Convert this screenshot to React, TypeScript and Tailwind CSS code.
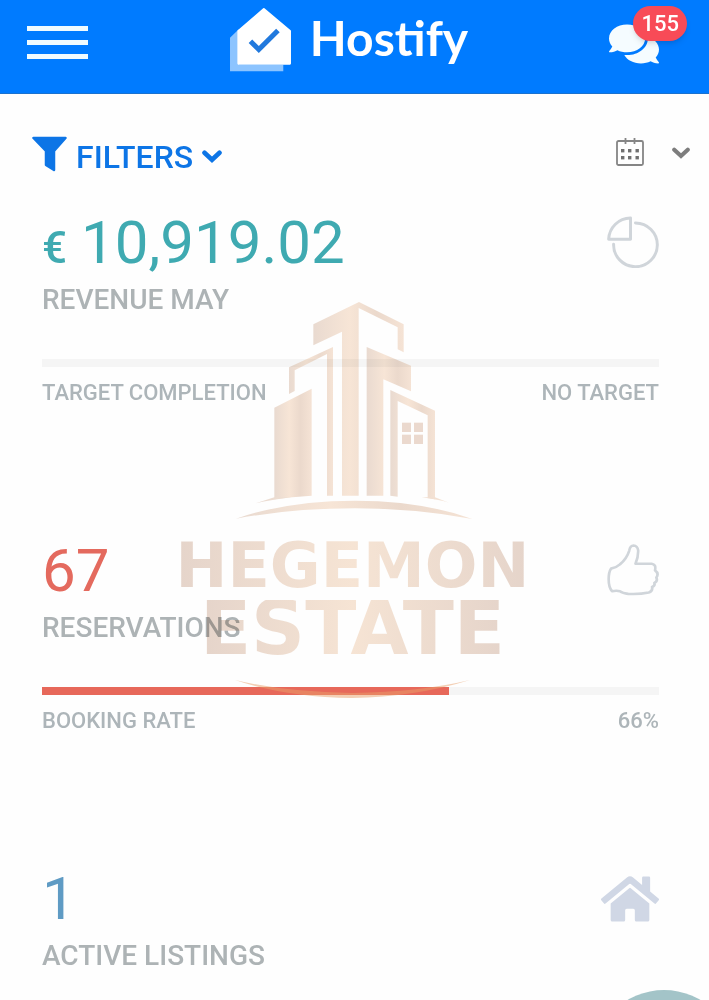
import type { ReactNode } from "react";
import { FaComments, FaHome } from "react-icons/fa";

function Logo() {
  return (
    <a href="#home" className="mb-0.5 flex items-center gap-[18px] text-white">
      <svg viewBox="30 20 188 194" className="h-[65px] w-[63px]" aria-hidden="true">
        <path d="M33 112 L60 86 V192 H192 V212 H33 Z" fill="#8cc4ff" />
        <path
          d="M134 26 L212 92 V189 H58 V92 Z"
          fill="#fff"
          stroke="#fff"
          strokeWidth="6"
          strokeLinejoin="round"
        />
        <path d="M94 122 L119 147 L176 90" fill="none" stroke="#2179dd" strokeWidth="15" />
      </svg>
      <span className="pb-1 font-['Lato',sans-serif] text-[48px] leading-[56px] font-bold">Hostify</span>
    </a>
  );
}

function Chevron({ className }: { className: string }) {
  return (
    <svg viewBox="0 0 20 13" className={className} aria-hidden="true">
      <path
        d="M2.5 2.8 L10 9.8 L17.5 2.8"
        fill="none"
        stroke="currentColor"
        strokeWidth="4.6"
        strokeLinecap="round"
      />
    </svg>
  );
}

function CalendarIcon() {
  return (
    <svg viewBox="0 0 28 28" className="size-7" aria-hidden="true">
      <rect x="1" y="3" width="26" height="24" rx="1.5" fill="none" stroke="#858585" strokeWidth="1.8" />
      <path d="M9.5 0 V6 M18.5 0 V6" stroke="#858585" strokeWidth="1.8" />
      <g fill="#6f6f6f">
        <rect x="5" y="11" width="3.4" height="3.4" />
        <rect x="12" y="11" width="3.4" height="3.4" />
        <rect x="19.5" y="11" width="3.4" height="3.4" />
        <rect x="5" y="18" width="3.4" height="3.4" />
        <rect x="12" y="18" width="3.4" height="3.4" />
        <rect x="19.5" y="18" width="3.4" height="3.4" />
      </g>
    </svg>
  );
}

function PieIcon() {
  return (
    <svg viewBox="51 46 157 157" className="size-[52px]" fill="none" stroke="#d0d5da" strokeWidth="9" aria-hidden="true">
      <path d="M122 52 V116 H56 C58 80 86 53 122 52 Z" strokeLinejoin="round" />
      <path d="M137 67 A66 66 0 1 1 71 131" strokeLinecap="round" />
    </svg>
  );
}

function ThumbIcon() {
  return (
    <svg viewBox="51 42 157 156" className="size-[52px]" fill="none" stroke="#d0d5da" strokeWidth="8" strokeLinejoin="round" aria-hidden="true">
      <path d="M137 101 H186 Q200 103 196 121 Q209 130 200 143 Q205 154 194 159 Q197 167 187 171 Q190 184 177 188 Q148 194 115 192 Q98 190 90 184 Q80 181 66 184 Q56 172 56 148 Q56 126 63 116 Q79 113 90 103 Q111 85 118 62 Q121 46 131 46 Q143 47 145 60 Q146 80 137 101 Z" />
    </svg>
  );
}

function Watermark() {
  return (
    <div
      aria-hidden="true"
      className="pointer-events-none absolute inset-x-0 top-[290px] flex flex-col items-center pr-1 font-['DejaVu_Sans',sans-serif] font-bold"
    >
      <div className="flex flex-col items-center mix-blend-multiply">
        <svg viewBox="0 0 765 720" className="h-[240px] w-[255px]">
          <defs>
            <linearGradient id="tower" x1="0" y1="0" x2="1" y2="0">
              <stop offset="0" stopColor="#eadbd1" />
              <stop offset="0.4" stopColor="#f8e6d7" />
              <stop offset="0.7" stopColor="#ecdacd" />
              <stop offset="1" stopColor="#f6e4d6" />
            </linearGradient>
          </defs>
          <g fill="url(#tower)">
            <path d="M265 103 L402 36 L536 103 V187 L518 178 V112 L401 54 V617 H351 V125 L265 166 Z" />
            <path d="M192 232 L324 171 V617 H306 V192 L209 241 V303 L192 312 Z" />
            <path d="M148 353 L260 296 V617 Q200 620 148 628 Z" />
            <path d="M425 171 L558 227 V304 L475 268 V617 H425 Z" />
            <path d="M496 300 L630 362 V628 L608 624 V376 L518 333 V620 L496 617 Z" />
            <path d="M92 640 L148 622 L200 622 Q140 629 92 640 Z M672 638 L630 622 L590 622 Q640 629 672 638 Z" />
            <path d="M33 686 Q190 632 390 632 Q590 632 742 687 Q570 655 390 655 Q200 655 33 686 Z" />
          </g>
          <g fill="#ecdacf">
            <rect x="531" y="398" width="27" height="28" />
            <rect x="567" y="398" width="27" height="28" />
            <rect x="531" y="434" width="27" height="28" />
            <rect x="567" y="434" width="27" height="28" />
          </g>
        </svg>
        <span className="mt-0.5 bg-linear-to-r from-[#e6d5cb] via-[#f7e5d5] to-[#e6d5cb] bg-clip-text text-[62px] leading-[68px] text-transparent">
          HEGEMON
        </span>
        <span className="bg-linear-to-r from-[#e6d5cb] via-[#f7e5d5] to-[#e6d5cb] bg-clip-text text-[75px] leading-[56px] text-transparent">
          ESTATE
        </span>
      </div>
      <svg viewBox="0 0 235 20" className="mt-6 h-[20px] w-[235px]">
        <path d="M0 0 Q50 12 117 13 Q185 12 235 0 Q180 17 117 18 Q50 17 0 0 Z" fill="#e9a06a" fillOpacity="0.5" />
      </svg>
    </div>
  );
}

type StatProps = {
  value: string;
  prefix?: string;
  label: string;
  valueClass: string;
  icon: ReactNode;
  progress?: { caption: string; result: string; percent: number };
};

function Stat({ value, prefix, label, valueClass, icon, progress }: StatProps) {
  return (
    <section>
      <div className="flex items-start justify-between">
        <div>
          <p className={`text-[60px] leading-[60px] ${valueClass}`}>
            {prefix && <span className="mr-[14px] text-[44px] leading-none font-medium">{prefix}</span>}
            {value}
          </p>
          <h2 className="mt-[11px] text-[28px] leading-8 font-medium text-[#adb3b5]">{label}</h2>
        </div>
        <div className="mt-[3px]">{icon}</div>
      </div>
      {progress && (
        <>
          <div className="mt-[43px] h-2 bg-[#f5f5f5]">
            <div className="h-full bg-[#e7685a]" style={{ width: `${progress.percent}%` }} />
          </div>
          <div className="mt-[14px] flex justify-between text-[22px] leading-6 font-medium text-[#adb5b9]">
            <span>{progress.caption}</span>
            <span>{progress.result}</span>
          </div>
        </>
      )}
    </section>
  );
}

export default function App() {
  return (
    <div className="relative min-h-screen overflow-hidden bg-[#fefefe] font-['Roboto',sans-serif]">
      <header className="flex h-[94px] items-center justify-between border-b border-[#1a72cf] bg-[#007bff] pr-[22px] pb-3 pl-[27px]">
        <button type="button" aria-label="Open menu" className="mt-1 flex w-[61px] flex-col gap-[9px]">
          <span className="h-[5px] bg-[#f0fbff]" />
          <span className="h-[5px] bg-[#f0fbff]" />
          <span className="h-[5px] bg-[#f0fbff]" />
        </button>
        <Logo />
        <button type="button" aria-label="Messages, 155 unread" className="relative flex h-[70px] w-[78px] items-center">
          <FaComments className="mt-1.5 size-[50px] text-[#f5fcff]" />
          <span className="absolute top-0 right-0 rounded-full bg-[#f84b57] px-2 text-[22px] leading-[35px] font-medium text-white shadow-md">
            155
          </span>
        </button>
      </header>

      <main className="pt-10 pb-6">
        <div className="flex h-10 items-center justify-between pr-[19px] pl-8">
          <button type="button" className="flex items-center gap-[9px] text-[#0d75e6]">
            <svg viewBox="0 0 35 36" className="h-9 w-[35px]" aria-hidden="true">
              <path
                d="M1.5 2 H33.5 L22 15 V34 L14 29 V15 Z"
                fill="currentColor"
                stroke="currentColor"
                strokeWidth="2.5"
                strokeLinejoin="round"
              />
            </svg>
            <span className="pt-1.5 text-[32px] leading-9 font-medium">FILTERS</span>
            <Chevron className="mt-1 h-[13px] w-5" />
          </button>
          <button type="button" aria-label="Choose dates" className="mb-1 flex items-center gap-7 text-[#7d7d7d]">
            <CalendarIcon />
            <Chevron className="mt-0.5 h-3 w-[18px]" />
          </button>
        </div>

        <div className="mt-[39px] flex flex-col gap-[136px] pr-[50px] pl-[42px]">
          <Stat
            prefix="€"
            value="10,919.02"
            label="REVENUE MAY"
            valueClass="text-[#3faab1]"
            icon={<PieIcon />}
            progress={{ caption: "TARGET COMPLETION", result: "NO TARGET", percent: 0 }}
          />
          <Stat
            value="67"
            label="RESERVATIONS"
            valueClass="text-[#e46a5e]"
            icon={<ThumbIcon />}
            progress={{ caption: "BOOKING RATE", result: "66%", percent: 66 }}
          />
          <Stat
            value="1"
            label="ACTIVE LISTINGS"
            valueClass="text-[#5f9bc4]"
            icon={<FaHome className="-mt-0.5 size-[58px] text-[#d0d7e5]" />}
          />
        </div>
      </main>

      <Watermark />

      <button
        type="button"
        aria-label="Open help"
        className="fixed -right-[27px] -bottom-[134px] size-36 rounded-full bg-[#a3c4c8]"
      />
    </div>
  );
}
